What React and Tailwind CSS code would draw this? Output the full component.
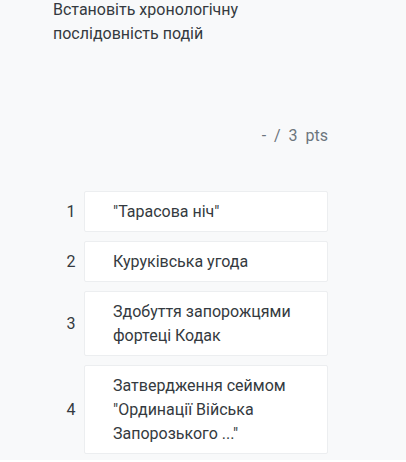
export default function App() {
  const items = [
    ['"Тарасова ніч"'],
    ['Куруківська угода'],
    ['Здобуття запорожцями', 'фортеці Кодак'],
    ['Затвердження сеймом', '"Ординації Війська', 'Запорозького ..."'],
  ];
  return (
    <div className="min-h-[462px] w-[406px] bg-[#f8f9fa] text-[#343a40]" style={{ fontFamily: 'Roboto, "Noto Sans", sans-serif' }}>
      <div className="ml-[53px] w-[275px]">
        <p className="-mt-[2px] text-[16px] leading-[24px]">
          Встановіть хронологічну<br />послідовність подій
        </p>
        <div className="mt-[78px] flex justify-end text-[16px] leading-[24px] text-[#6c757d]">
          <span className="whitespace-pre">-  /  3  pts</span>
        </div>
        <div className="mt-[43px] flex flex-col gap-[9px]">
          {items.map((lines, i) => (
            <div key={i} className="flex items-center">
              <div className="w-[31px] shrink-0 pl-[5px] text-center text-[16px] leading-[24px] text-[#343a40]">{i + 1}</div>
              <div className="flex-1 rounded-[2px] border border-[#eceef0] bg-white pb-[7px] pl-[28px] pr-2 pt-[8px] text-[16px] leading-[24px]">
                {lines.map((l, j) => (
                  <div key={j}>{l}</div>
                ))}
              </div>
            </div>
          ))}
        </div>
      </div>
    </div>
  );
}
